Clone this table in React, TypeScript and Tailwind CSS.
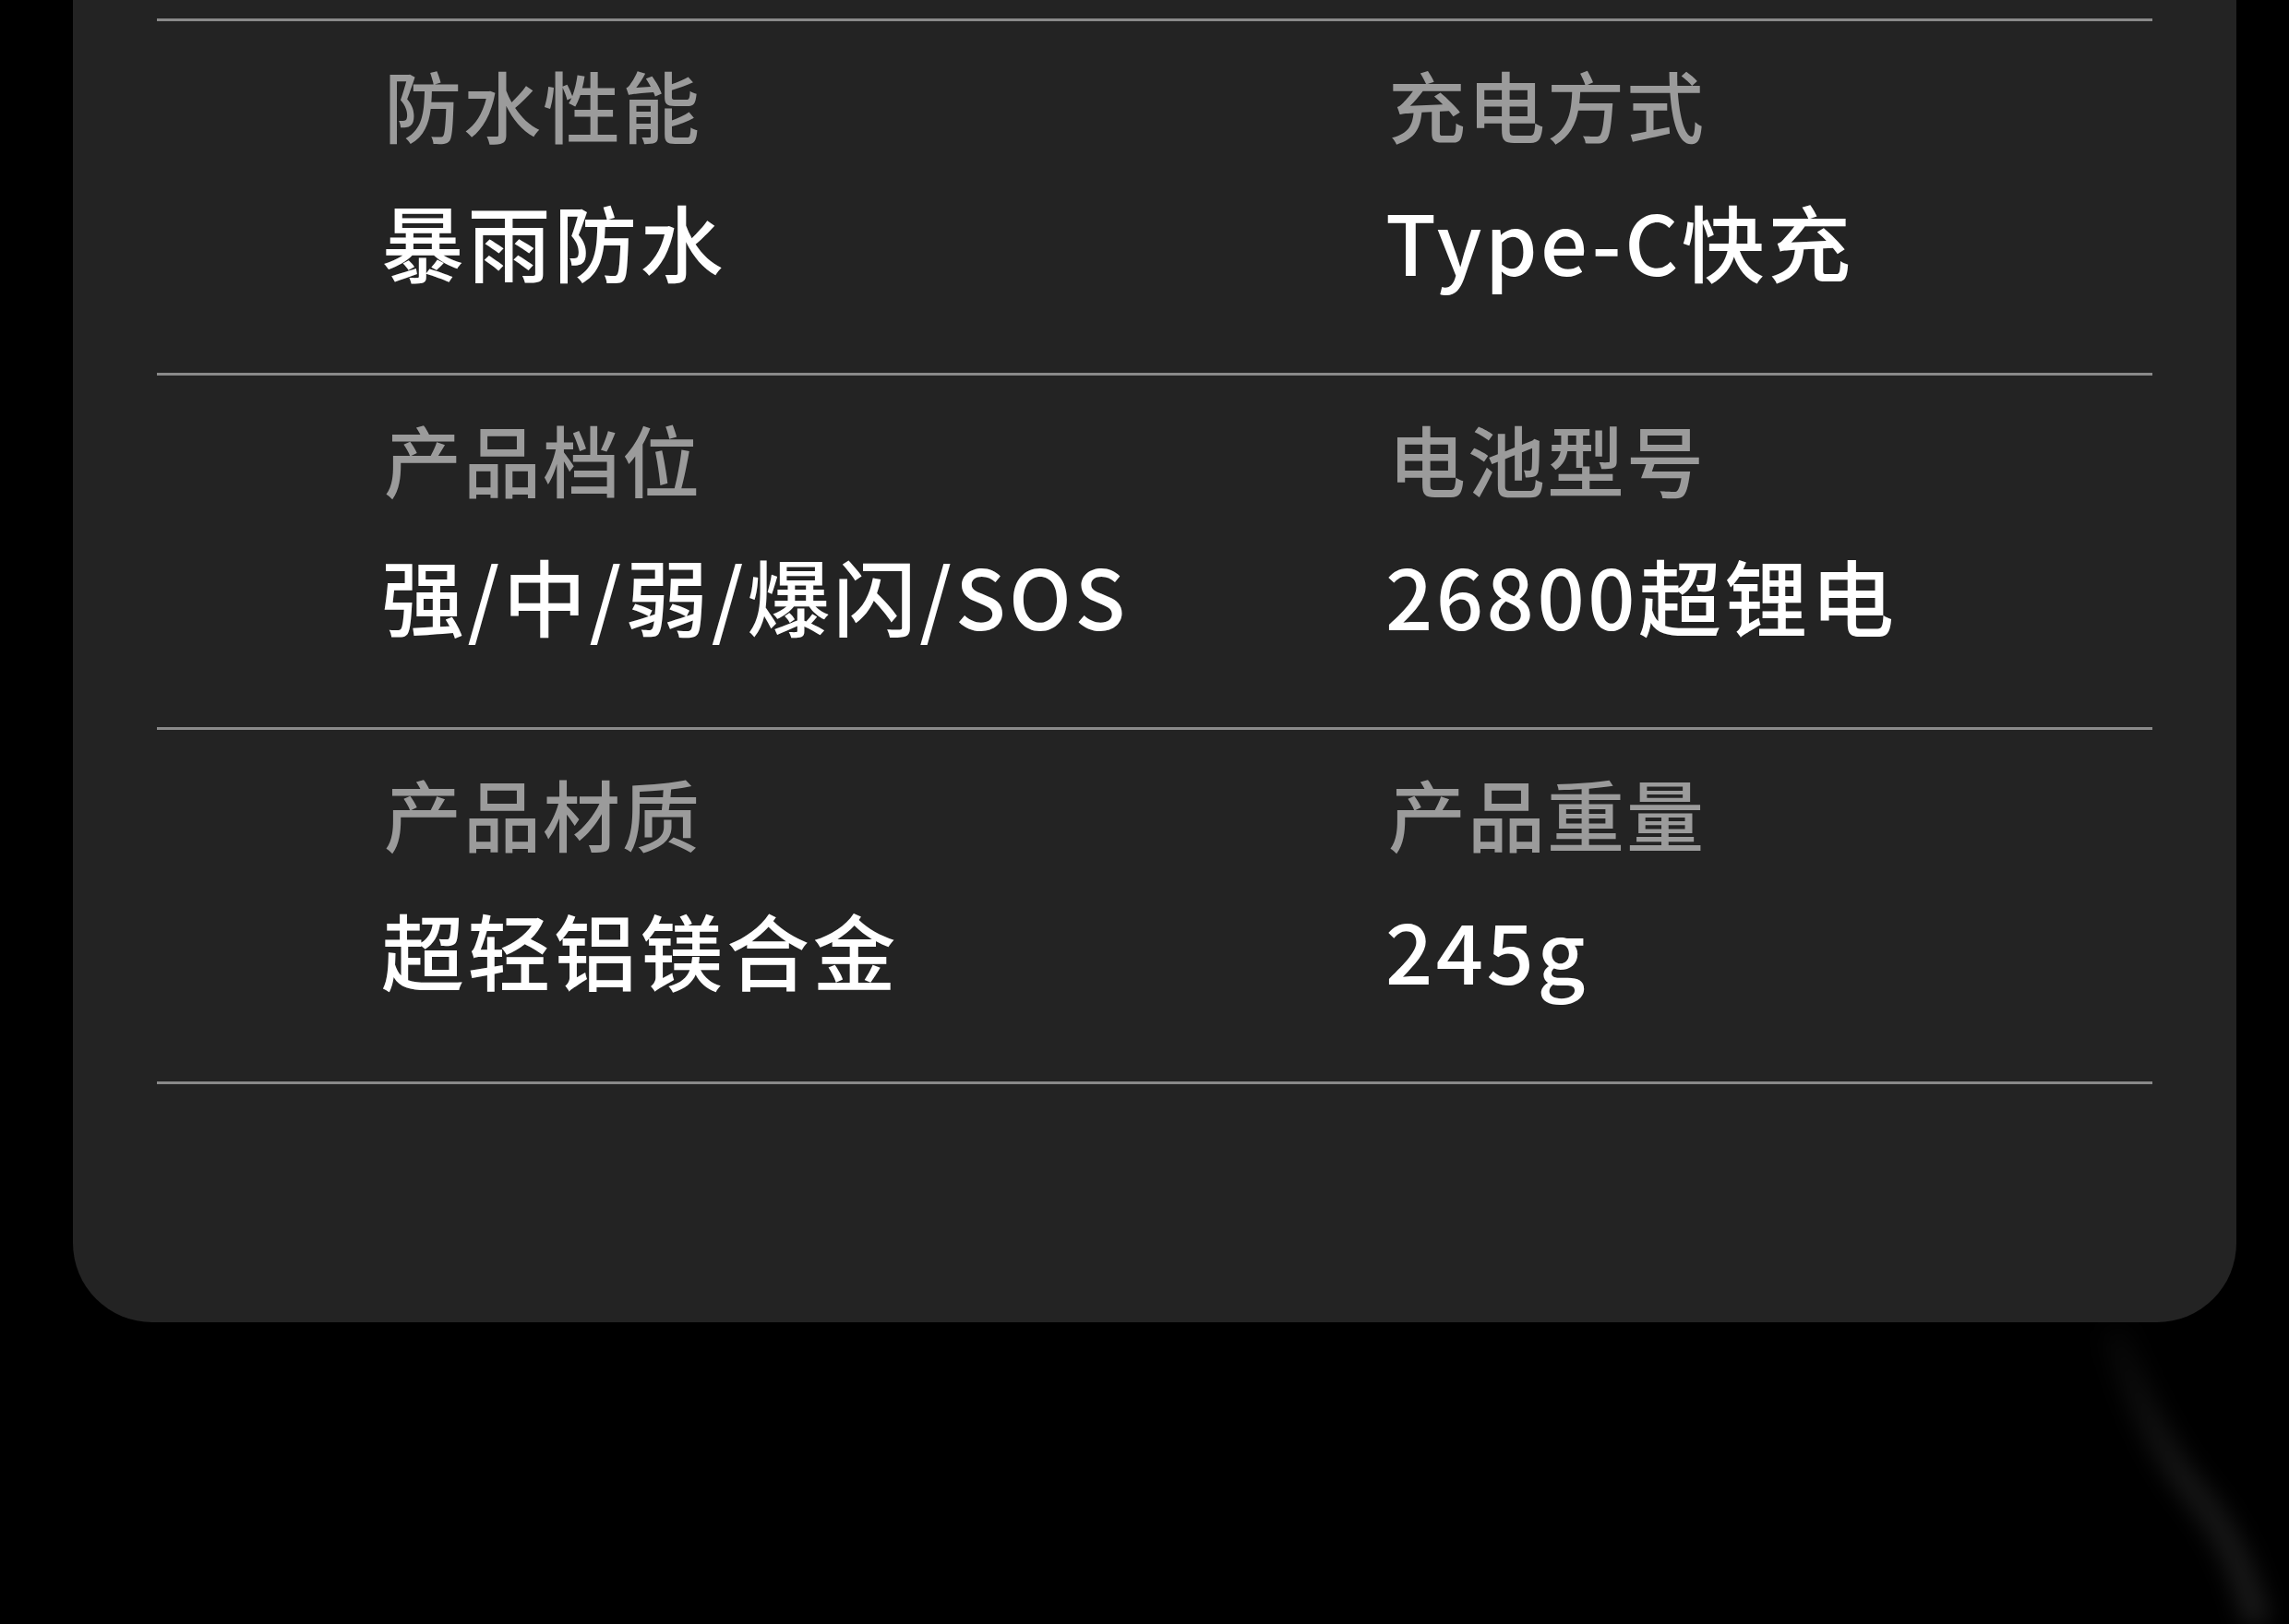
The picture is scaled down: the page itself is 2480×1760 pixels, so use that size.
import React from "react";

type Spec = { label: string; value: string };

const rows: Spec[][] = [
    [
        {label: "防水性能", value: "暴雨防水"},
        {label: "充电方式", value: "Type-C快充"},
    ],
    [
        {label: "产品档位", value: "强/中/弱/爆闪/SOS"},
        {label: "电池型号", value: "26800超锂电"},
    ],
    [
        {label: "产品材质", value: "超轻铝镁合金"},
        {label: "产品重量", value: "245g"},
    ],
];

const Divider = () => <div className="h-[3px] w-full bg-[#8a8a8a]"/>;

const SpecCell = ({item}: { item: Spec }) => {
    return <div className="flex flex-col">
        <span className="pl-[3px] text-[84px] font-medium leading-none tracking-[2px] text-[#9b9b9b]">
            {item.label}
        </span>
        <span className="mt-[60px] text-[90px] font-medium leading-none tracking-[3.5px] text-white">
            {item.value}
        </span>
    </div>
}

const App = () => {
    return <div
        className="relative min-h-[1760px] w-full overflow-hidden bg-black"
        style={{fontFamily: '"Noto Sans CJK SC", "Noto Sans", sans-serif'}}>
        {/* faint light streak under the card */}
        <svg className="pointer-events-none absolute inset-0 h-[1760px] w-[2480px] blur-[12px]" viewBox="0 0 2480 1760">
            <defs>
                <linearGradient id="fade" x1="0" y1="1440" x2="0" y2="1760" gradientUnits="userSpaceOnUse">
                    <stop offset="0" stopColor="#050505"/>
                    <stop offset="0.5" stopColor="#151515"/>
                    <stop offset="1" stopColor="#191919"/>
                </linearGradient>
            </defs>
            <path d="M2290 1440 Q2330 1560 2380 1620 T2450 1780" stroke="url(#fade)" strokeWidth="30"
                  fill="none"/>
        </svg>

        <div className="relative ml-[79px] w-[2344px] rounded-b-[86px] bg-[#232323] px-[91px] pb-[258px] pt-[20px]">
            <Divider/>
            {rows.map((row, index) => <div key={index}>
                <div className="grid h-[381px] grid-cols-[1088px_1fr] pl-[243px] pt-[48px]">
                    {row.map((item, i) => <SpecCell key={i} item={item}/>)}
                </div>
                <Divider/>
            </div>)}
        </div>
    </div>
}

export default App
